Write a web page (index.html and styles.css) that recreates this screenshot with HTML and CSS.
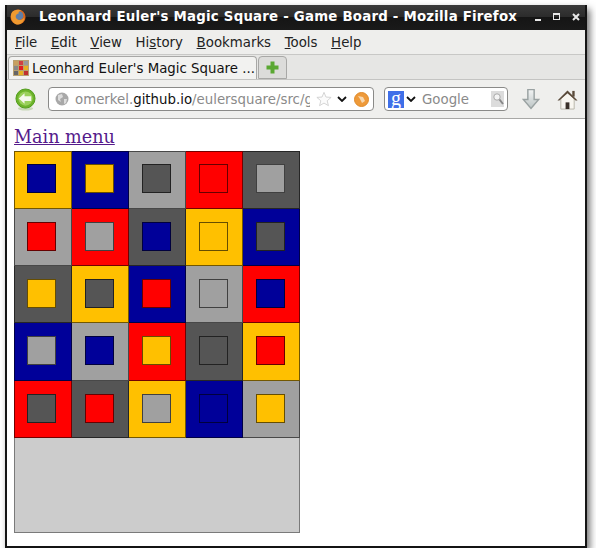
FILE: index.html
```html
<!DOCTYPE html>
<html lang="en">
<head>
<meta charset="UTF-8">
<meta name="viewport" content="width=device-width, initial-scale=1.0">
<title>Leonhard Euler's Magic Square - Game Board</title>
<link rel="stylesheet" href="styles.css">
</head>
<body>
<div class="window">
    <div class="titlebar">
        <svg class="fx-icon" width="16" height="16" viewBox="0 0 18 18">
            <circle cx="9" cy="9" r="8.5" fill="#d9661a"/>
            <circle cx="10" cy="7.5" r="5" fill="#5f7fa8"/>
            <path d="M2 4 C4 1 9 0 13 1.5 C10 2.5 9 4 10 5 C7 5 5.5 8 7 10.5 C9 13.5 13.5 13 16 9.5 C16.5 14 12.5 17.5 9 17.5 C3.5 17.5 -1 10 2 4Z" fill="#ef9a30"/>
        </svg>
        <span class="title-text">Leonhard Euler's Magic Square - Game Board - Mozilla Firefox</span>
        <div class="win-buttons">
            <span class="win-min"></span>
            <span class="win-max"></span>
            <svg width="8" height="8" viewBox="0 0 8 8"><path d="M1 1 L7 7 M7 1 L1 7" stroke="#e8e8e8" stroke-width="2"/></svg>
        </div>
    </div>

    <div class="menubar">
        <span><u>F</u>ile</span>
        <span><u>E</u>dit</span>
        <span><u>V</u>iew</span>
        <span>Hi<u>s</u>tory</span>
        <span><u>B</u>ookmarks</span>
        <span><u>T</u>ools</span>
        <span><u>H</u>elp</span>
    </div>

    <div class="tabbar">
        <div class="tab">
            <svg class="tab-icon" width="16" height="16" viewBox="0 0 16 16">
                <rect width="16" height="16" fill="#b8a070"/>
                <rect x="1" y="1" width="4" height="4" fill="#c8a060"/>
                <rect x="6" y="1" width="4" height="4" fill="#d04040"/>
                <rect x="11" y="1" width="4" height="4" fill="#999"/>
                <rect x="1" y="6" width="4" height="4" fill="#888"/>
                <rect x="6" y="6" width="4" height="4" fill="#e02020"/>
                <rect x="11" y="6" width="4" height="4" fill="#e8b020"/>
                <rect x="1" y="11" width="4" height="4" fill="#666"/>
                <rect x="6" y="11" width="4" height="4" fill="#e8b020"/>
                <rect x="11" y="11" width="4" height="4" fill="#c03030"/>
            </svg>
            <span>Leonhard Euler's Magic Square ...</span>
        </div>
        <div class="new-tab">
            <svg width="13" height="13" viewBox="0 0 13 13"><path d="M4.5 0.5 H8.5 V4.5 H12.5 V8.5 H8.5 V12.5 H4.5 V8.5 H0.5 V4.5 H4.5Z" fill="#5aa832"/></svg>
        </div>
    </div>

    <div class="navbar">
        <svg class="back" width="21" height="23" viewBox="0 0 22 24">
            <ellipse cx="11" cy="21.5" rx="8" ry="2" fill="#c8d8b8"/>
            <circle cx="11" cy="11" r="10" fill="#6cb32a" stroke="#4f9a18"/>
            <circle cx="11" cy="11" r="7.5" fill="#9ad05a"/>
            <path d="M4 11 L10 5.5 V8.5 H17 V13.5 H10 V16.5Z" fill="#f4f8ec"/>
        </svg>
        <div class="urlbar">
            <svg class="globe" width="14" height="14" viewBox="0 0 14 14">
                <circle cx="7" cy="7" r="6.5" fill="#a8a8a8"/>
                <path d="M3 3 L7 2 L8 5 L5 7 L6 10 L3 8Z M9 7 L12 7 L11 11 L9 12Z" fill="#dcdcdc"/>
            </svg>
            <span class="url"><span class="dim">omerkel.</span>github.io<span class="dim">/eulersquare/src/ga</span></span>
            <svg class="star" width="16" height="16" viewBox="0 0 18 18"><path d="M9 1.5 L11.2 6.8 L17 7.2 L12.6 11 L14 16.5 L9 13.6 L4 16.5 L5.4 11 L1 7.2 L6.8 6.8Z" fill="#fbfbfb" stroke="#d0d0d0"/></svg>
            <svg class="chev" width="10" height="6" viewBox="0 0 10 6"><path d="M1 1 L5 5 L9 1" fill="none" stroke="#111" stroke-width="1.8"/></svg>
            <svg class="feed" width="15" height="15" viewBox="0 0 15 15">
                <circle cx="7.5" cy="7.5" r="7" fill="#ee9a3a" stroke="#e08a28"/>
                <path d="M4 4 L9 5 L11 9 L8 11 L6 7Z" fill="#f8d8b0"/>
            </svg>
        </div>
        <div class="searchbar">
            <span class="g-box">g</span>
            <svg class="chev" width="10" height="6" viewBox="0 0 10 6"><path d="M1 1 L5 5 L9 1" fill="none" stroke="#111" stroke-width="1.8"/></svg>
            <span class="search-text">Google</span>
            <svg class="lens" width="13" height="16" viewBox="0 0 13 16">
                <rect width="13" height="16" fill="#dcdcdc"/>
                <circle cx="6" cy="6" r="3.2" fill="#f4f4f4" stroke="#aaa"/>
                <path d="M8.5 8.5 L12 13" stroke="#888" stroke-width="2"/>
            </svg>
        </div>
        <svg class="download" width="18" height="23" viewBox="0 0 20 24">
            <defs>
                <linearGradient id="arrow-fill" x1="0" y1="0" x2="0" y2="1">
                    <stop offset="0" stop-color="#f2f4f4"/>
                    <stop offset="1" stop-color="#bcc4c4"/>
                </linearGradient>
            </defs>
            <path d="M6.5 1 H13.5 V12 H18.5 L10 22 L1.5 12 H6.5Z" fill="url(#arrow-fill)" stroke="#9aa2a2" stroke-width="1.6"/>
        </svg>
        <svg class="home" width="21" height="21" viewBox="0 0 22 22">
            <rect x="16" y="2" width="2.5" height="6" fill="#5a4a3a"/>
            <path d="M4 10 L11 4 L18 10 V21 H4Z" fill="#f8f6f0" stroke="#b8b4a8"/>
            <path d="M0.5 12 L11 1.5 L21.5 12 L19.5 12 L11 4.5 L2.5 12Z" fill="#5a4a3a"/>
            <rect x="9" y="14" width="4" height="7" fill="#3a3028"/>
        </svg>
    </div>

    <div class="content">
        <a class="menu-link" href="#">Main menu</a>
        <div class="board">
            <div class="cell yellow"><div class="piece blue"></div></div>
            <div class="cell blue"><div class="piece yellow"></div></div>
            <div class="cell gray"><div class="piece dark"></div></div>
            <div class="cell red"><div class="piece red"></div></div>
            <div class="cell dark"><div class="piece gray"></div></div>

            <div class="cell gray"><div class="piece red"></div></div>
            <div class="cell red"><div class="piece gray"></div></div>
            <div class="cell dark"><div class="piece blue"></div></div>
            <div class="cell yellow"><div class="piece yellow"></div></div>
            <div class="cell blue"><div class="piece dark"></div></div>

            <div class="cell dark"><div class="piece yellow"></div></div>
            <div class="cell yellow"><div class="piece dark"></div></div>
            <div class="cell blue"><div class="piece red"></div></div>
            <div class="cell gray"><div class="piece gray"></div></div>
            <div class="cell red"><div class="piece blue"></div></div>

            <div class="cell blue"><div class="piece gray"></div></div>
            <div class="cell gray"><div class="piece blue"></div></div>
            <div class="cell red"><div class="piece yellow"></div></div>
            <div class="cell dark"><div class="piece dark"></div></div>
            <div class="cell yellow"><div class="piece red"></div></div>

            <div class="cell red"><div class="piece dark"></div></div>
            <div class="cell dark"><div class="piece red"></div></div>
            <div class="cell yellow"><div class="piece gray"></div></div>
            <div class="cell blue"><div class="piece blue"></div></div>
            <div class="cell gray"><div class="piece yellow"></div></div>
        </div>
        <div class="tray"></div>
    </div>
</div>
</body>
</html>
```

FILE: styles.css
```css
body {
    margin: 0;
    padding: 5px 0 0 5px;
    background-color: #fff;
    font-family: "DejaVu Sans", sans-serif;
}

.window {
    width: 582px;
    height: 543px;
    box-sizing: border-box;
    border: 2px solid #141414;
    border-top-width: 0;
    background-color: #fff;
    box-shadow: 3px 4px 7px rgba(0, 0, 0, 0.55);
    overflow: hidden;
}

.titlebar {
    display: flex;
    align-items: center;
    height: 25px;
    box-sizing: border-box;
    padding: 0 0 2px 3px;
    background: linear-gradient(#3a3a3a 0, #2c2c2c 46%, #151515 50%, #1a1a1a 100%);
    color: #fff;
}

.fx-icon {
    flex: none;
    margin-right: 13px;
}

.title-text {
    flex: none;
    font-size: 13.33px;
    font-weight: bold;
    letter-spacing: 0.22px;
    white-space: nowrap;
}

.win-buttons {
    display: flex;
    align-items: center;
    gap: 12px;
    margin-left: auto;
    margin-right: 5px;
}

.win-min {
    width: 6px;
    height: 2px;
    margin-top: 6px;
    background-color: #e8e8e8;
}

.win-max {
    width: 5px;
    height: 4px;
    border: 1px solid #e8e8e8;
    border-top-width: 2px;
}

.menubar {
    display: flex;
    align-items: center;
    gap: 13.6px;
    height: 25px;
    box-sizing: border-box;
    padding-left: 8px;
    background-color: #eeeeec;
    border-bottom: 1px solid #c8c8c6;
    font-size: 13.33px;
    color: #222;
}

.tabbar {
    display: flex;
    align-items: flex-end;
    gap: 1px;
    height: 25px;
    box-sizing: border-box;
    padding-left: 1px;
    background-color: #e6e6e4;
    border-bottom: 1px solid #c4c4c2;
}

.tab {
    display: flex;
    align-items: center;
    gap: 3px;
    width: 249px;
    height: 23px;
    box-sizing: border-box;
    padding-left: 4px;
    background-color: #f2f2f0;
    border: 1px solid #a8a8a6;
    border-bottom: 0;
    border-radius: 4px 4px 0 0;
    font-size: 13.33px;
    color: #111;
    white-space: nowrap;
}

.tab-icon {
    flex: none;
}

.new-tab {
    display: flex;
    align-items: center;
    justify-content: center;
    width: 29px;
    height: 23px;
    box-sizing: border-box;
    background-color: #dcdcda;
    border: 1px solid #a8a8a6;
    border-radius: 4px 4px 0 0;
}

.navbar {
    display: flex;
    align-items: center;
    height: 39px;
    box-sizing: border-box;
    padding-left: 8px;
    background-color: #efefed;
    border-bottom: 1px solid #a8a8a6;
}

.back {
    flex: none;
}

.urlbar,
.searchbar {
    display: flex;
    flex: none;
    align-items: center;
    height: 24px;
    box-sizing: border-box;
    background-color: #fff;
    border: 1px solid #8a8a88;
    border-radius: 4px;
    font-size: 13.33px;
    white-space: nowrap;
}

.urlbar {
    width: 326px;
    margin-left: 12px;
    padding-left: 6px;
}

.globe,
.star,
.feed,
.chev,
.lens {
    flex: none;
}

.url {
    width: 235px;
    margin: 0 6px;
    overflow: hidden;
    color: #111;
}

.dim {
    color: #8a8a8a;
}

.urlbar .chev {
    margin: 0 7px 0 5px;
}

.searchbar {
    width: 124px;
    margin-left: 10px;
    padding-left: 3px;
}

.g-box {
    flex: none;
    width: 16px;
    height: 17px;
    background-color: #3f6fe8;
    color: #fff;
    font-family: "Liberation Serif", serif;
    font-size: 20px;
    line-height: 14px;
    text-align: center;
}

.searchbar .chev {
    margin-left: 2px;
}

.search-text {
    width: 69px;
    margin-left: 6px;
    color: #8a8a8a;
}

.download {
    flex: none;
    margin-left: 14px;
}

.home {
    flex: none;
    margin-left: 17px;
}

.content {
    padding: 5px 7px;
}

.menu-link {
    display: block;
    height: 27px;
    font-family: "DejaVu Serif", serif;
    font-size: 17.6px;
    line-height: 26px;
    color: #551a8b;
}

.board {
    display: grid;
    grid-template-columns: 58px repeat(4, 57px);
    grid-template-rows: 58px 57px 57px 58px 57px;
}

.cell {
    box-sizing: border-box;
    padding: 13px 0 0 13px;
    border: 0 solid rgba(0, 0, 0, 0.55);
    border-width: 0 1px 1px 0;
}

/* the outer edge of the board gets its line from the first row and column */
.cell:nth-child(-n+5) {
    padding-top: 12px;
    border-top-width: 1px;
}

.cell:nth-child(5n+1) {
    padding-left: 12px;
    border-left-width: 1px;
}

.piece {
    width: 29px;
    height: 29px;
    box-sizing: border-box;
    border: 1px solid rgba(0, 0, 0, 0.6);
}

.tray {
    width: 286px;
    height: 95px;
    box-sizing: border-box;
    background-color: #cccccc;
    border: 1px solid #7a7a7a;
    border-top: 0;
}

.yellow {
    background-color: #ffc000;
}

.blue {
    background-color: #000099;
}

.gray {
    background-color: #a0a0a0;
}

.dark {
    background-color: #555555;
}

.red {
    background-color: #ff0000;
}
```
